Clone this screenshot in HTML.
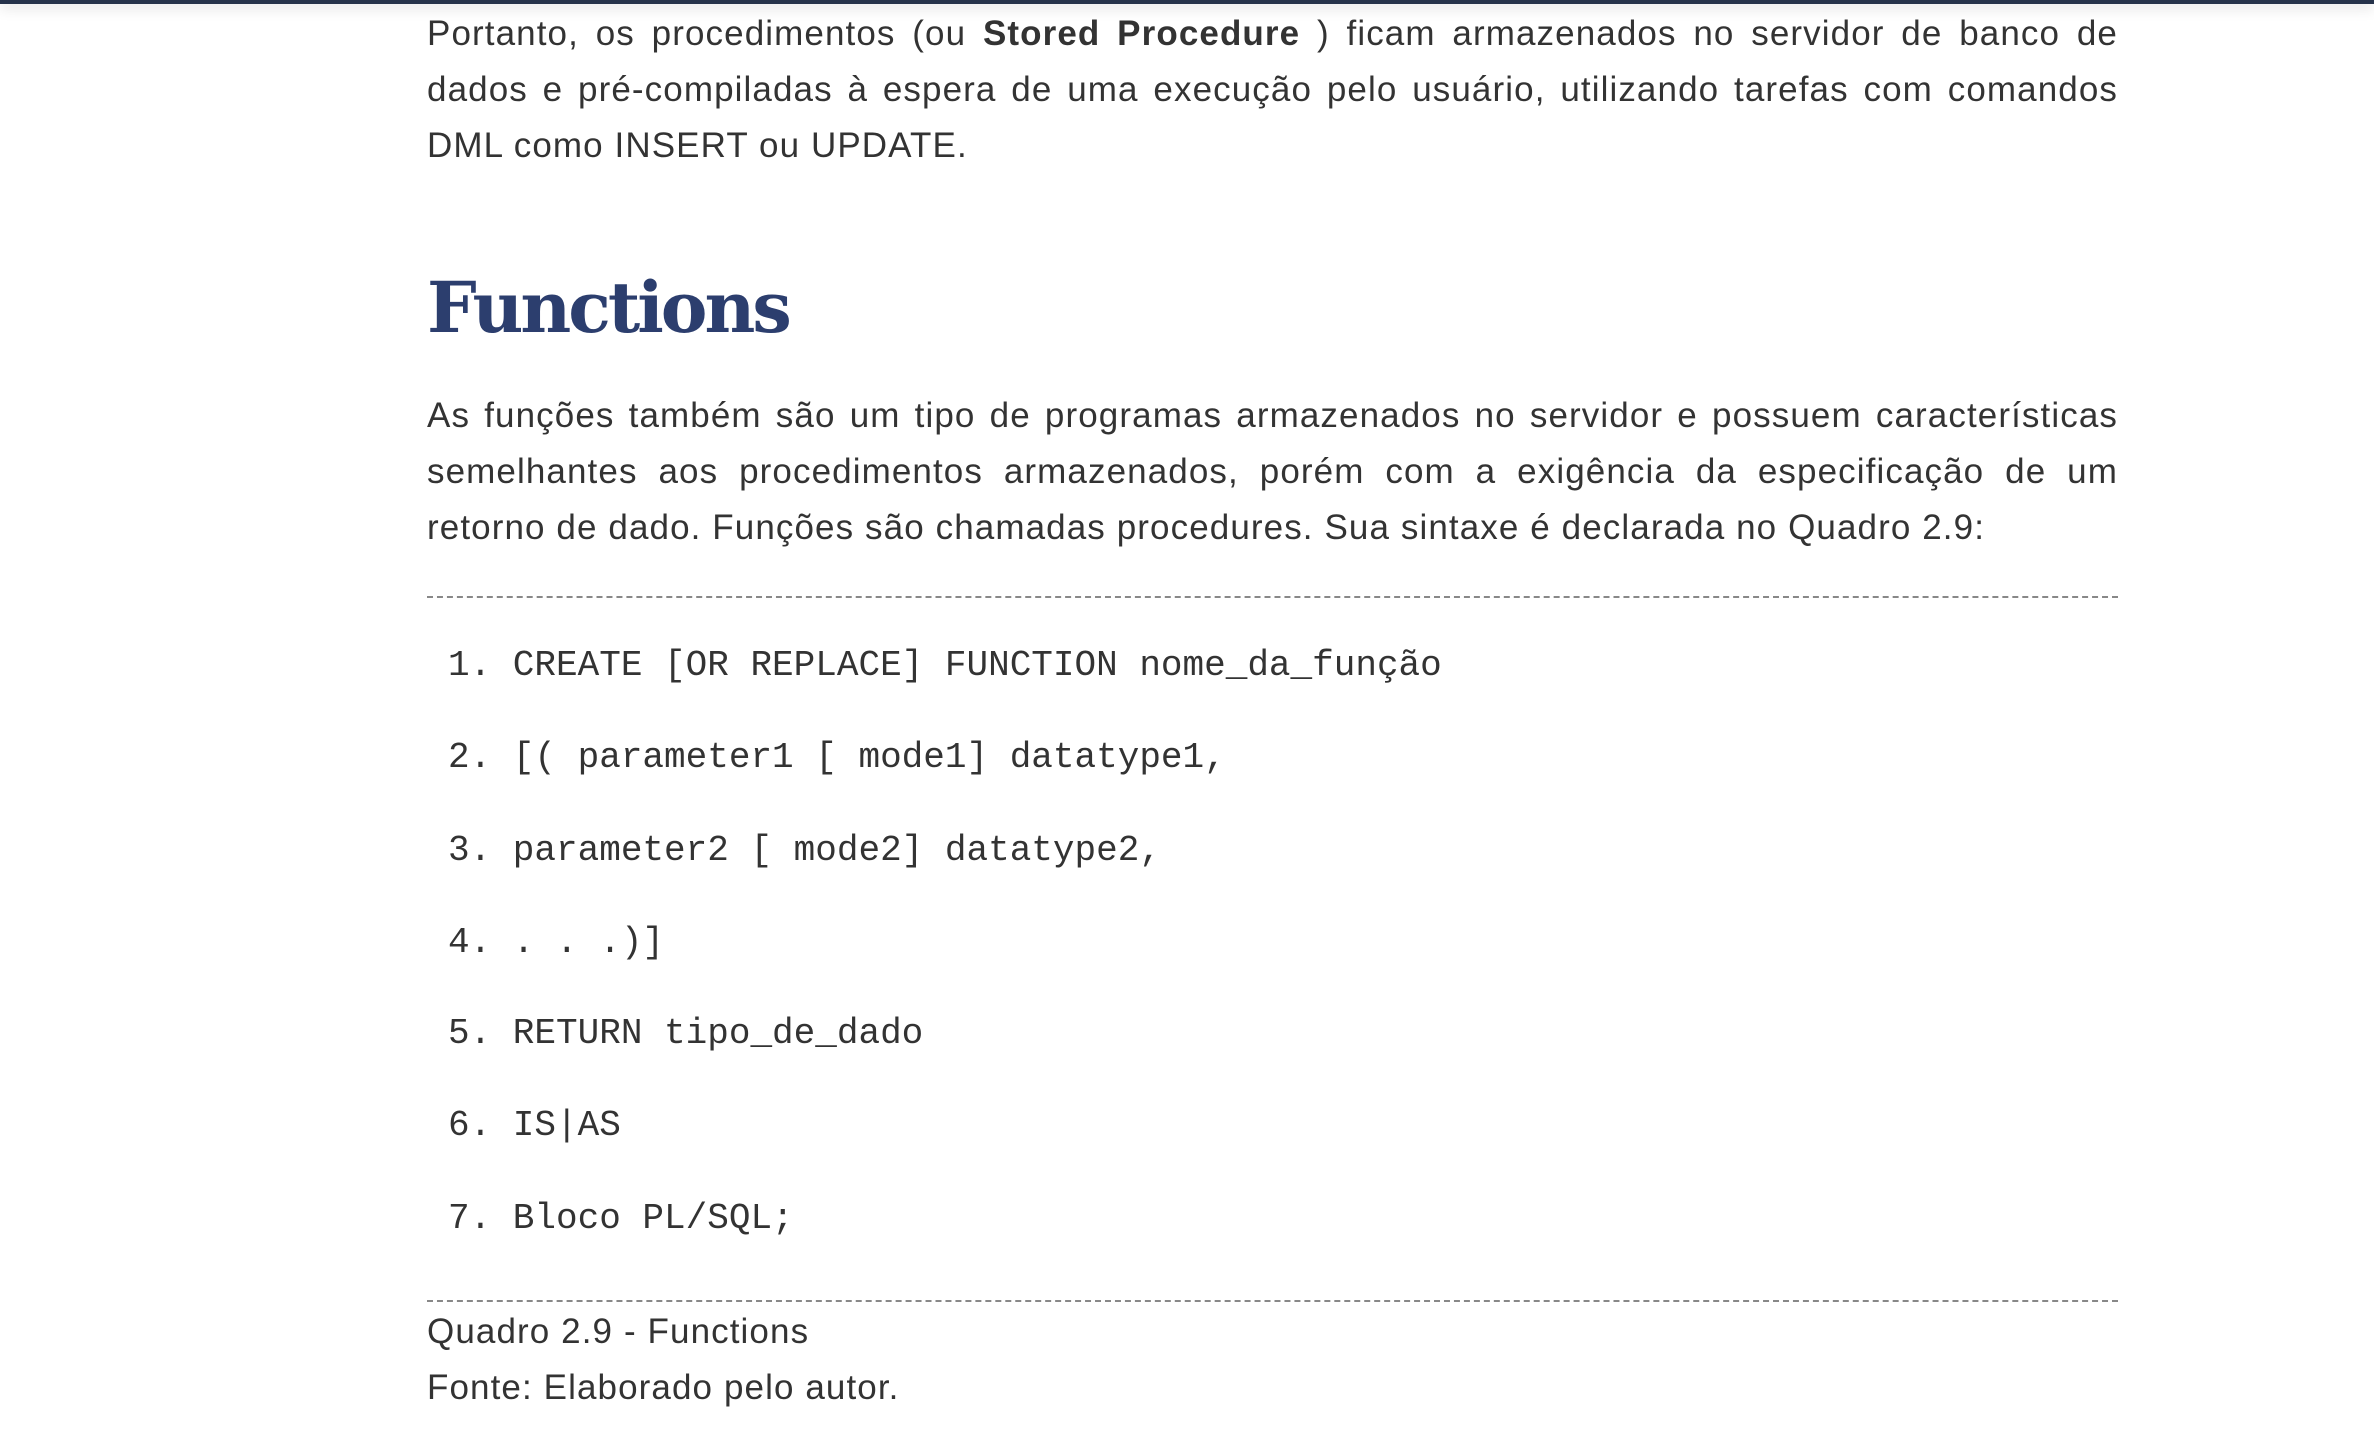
<!DOCTYPE html>
<html><head><meta charset="utf-8"><style>
body{margin:0;width:2374px;height:1436px;background:#fff;overflow:hidden;position:relative;font-family:"Liberation Sans",sans-serif;color:#333}
.bar{position:absolute;left:0;top:0;width:100%;height:4px;background:#25324a;box-shadow:0 2px 14px rgba(0,0,0,.25)}
.p{position:absolute;left:427px;width:1691px;font-size:35px;line-height:56px;letter-spacing:1.1px;text-align:justify;text-align-last:left}
h1{position:absolute;left:427px;top:266px;margin:0;font-family:"DejaVu Serif","Liberation Serif",serif;font-weight:bold;font-size:70px;color:#2c3e6e;letter-spacing:-3px}
.dash{position:absolute;left:427px;width:1691px;border-top:2px dashed #888}
.code{position:absolute;left:448px;font-family:"Liberation Mono",monospace;font-size:36px;color:#333;white-space:pre}
</style></head><body>
<div class="bar"></div>
<div class="p" style="top:6px">Portanto, os procedimentos (ou <b>Stored Procedure</b> ) ficam armazenados no servidor de banco de dados e pré-compiladas à espera de uma execução pelo usuário, utilizando tarefas com comandos DML como INSERT ou UPDATE.</div>
<h1>Functions</h1>
<div class="p" style="top:388px">As funções também são um tipo de programas armazenados no servidor e possuem características semelhantes aos procedimentos armazenados, porém com a exigência da especificação de um retorno de dado. Funções são chamadas procedures. Sua sintaxe é declarada no Quadro 2.9:</div>
<div class="dash" style="top:596px"></div>
<div class="code" style="top:645px">1. CREATE [OR REPLACE] FUNCTION nome_da_função</div>
<div class="code" style="top:737px">2. [( parameter1 [ mode1] datatype1,</div>
<div class="code" style="top:830px">3. parameter2 [ mode2] datatype2,</div>
<div class="code" style="top:922px">4. . . .)]</div>
<div class="code" style="top:1013px">5. RETURN tipo_de_dado</div>
<div class="code" style="top:1105px">6. IS|AS</div>
<div class="code" style="top:1198px">7. Bloco PL/SQL;</div>
<div class="dash" style="top:1300px"></div>
<div class="p" style="top:1304px">Quadro 2.9 - Functions<br>Fonte: Elaborado pelo autor.</div>
</body></html>
